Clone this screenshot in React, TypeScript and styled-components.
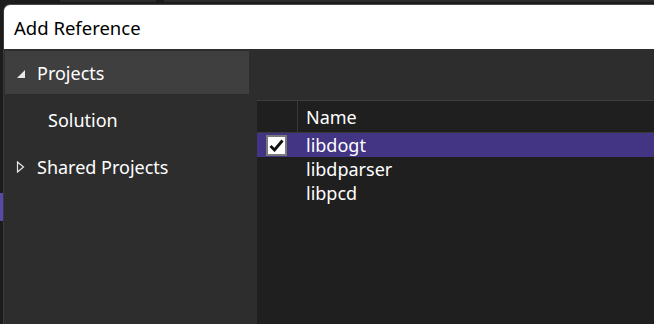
import React from 'react';
import styled, {createGlobalStyle} from 'styled-components';

const GlobalStyle = createGlobalStyle`
  html, body {
    margin: 0;
    padding: 0;
    background: #1c1c1c;
  }
  body {
    font-family: "Noto Sans", "Open Sans", sans-serif;
    color: #ffffff;
  }
`;

const Page = styled.div`
  display: flex;
  flex-direction: column;
  width: 654px;
  height: 324px;
  overflow: hidden;
  background: #1c1c1c;
`;

const TabStrip = styled.div`
  display: flex;
  height: 4px;
  gap: 8px;
  padding-left: 60px;
`;

const Tab = styled.div<{$width: number}>`
  width: ${(p) => p.$width}px;
  height: 2px;
  background: #2b2b2b;
`;

const Window = styled.div`
  flex: 1;
  display: flex;
  min-height: 0;
`;

const EdgeStrip = styled.div`
  width: 3px;
  display: flex;
  flex-direction: column;
  padding-top: 189px;
`;

const EdgeMarker = styled.div`
  width: 3px;
  height: 28px;
  background: #5a48a8;
`;

const Dialog = styled.div`
  flex: 1;
  display: flex;
  flex-direction: column;
  border-top: 1px solid #474747;
  border-left: 1px solid #3a3a3a;
  border-top-left-radius: 7px;
  overflow: hidden;
  background: #2d2d2d;
`;

const TitleBar = styled.div`
  height: 44px;
  flex-shrink: 0;
  display: flex;
  align-items: center;
  padding-left: 10px;
  background: #ffffff;
  color: #000000;
  font-size: 18.5px;
`;

const Body = styled.div`
  flex: 1;
  display: flex;
  min-height: 0;
`;

const Sidebar = styled.div`
  width: 245px;
  display: flex;
  flex-direction: column;
`;

const TreeItem = styled.div<{$selected?: boolean; $indent?: number}>`
  height: 43px;
  margin: 2px 0 2px 1px;
  display: flex;
  align-items: center;
  padding-left: ${(p) => p.$indent ?? 11}px;
  background: ${(p) => (p.$selected ? '#3f3f3f' : 'transparent')};
  font-size: 18px;
`;

const Expander = styled.svg`
  width: 10px;
  height: 12px;
  margin-right: 11px;
  flex-shrink: 0;
`;

const Main = styled.div`
  flex: 1;
  display: flex;
  flex-direction: column;
  padding: 51px 0 0 8px;
`;

const Grid = styled.div`
  flex: 1;
  background: #1f1f1f;
  border-top: 1px solid #3e3e3e;
  font-size: 18px;
`;

const HeaderRow = styled.div`
  display: flex;
  height: 31px;
  border-bottom: 1px solid #3a3a3a;
`;

const CheckCol = styled.div<{$header?: boolean}>`
  width: 41px;
  flex-shrink: 0;
  display: flex;
  align-items: center;
  justify-content: flex-end;
  padding-right: 10px;
  box-sizing: border-box;
  border-right: ${(p) => (p.$header ? '1px solid #3a3a3a' : '1px solid transparent')};
`;

const NameCell = styled.div`
  display: flex;
  align-items: center;
  padding-left: 8px;
`;

const Row = styled.div<{$selected?: boolean}>`
  display: flex;
  height: 24px;
  background: ${(p) => (p.$selected ? '#433584' : 'transparent')};
`;

const CheckBox = styled.div`
  width: 21px;
  height: 21px;
  box-sizing: border-box;
  border: 2px solid #7a7a7a;
  background: #ffffff;
  display: flex;
  align-items: center;
  justify-content: center;
`;

const items = [
  {name: 'libdogt', checked: true},
  {name: 'libdparser', checked: false},
  {name: 'libpcd', checked: false},
];

const App = () => (
  <>
    <GlobalStyle />
    <Page>
      <TabStrip>
        <Tab $width={98} />
        <Tab $width={500} />
      </TabStrip>
      <Window>
        <EdgeStrip>
          <EdgeMarker />
        </EdgeStrip>
        <Dialog>
          <TitleBar>Add Reference</TitleBar>
          <Body>
            <Sidebar>
              <TreeItem $selected>
                <Expander viewBox="0 0 10 12">
                  <polygon points="9,3 9,11 1,11" fill="#e8e8e8" />
                </Expander>
                Projects
              </TreeItem>
              <TreeItem $indent={43}>Solution</TreeItem>
              <TreeItem>
                <Expander viewBox="0 0 10 12">
                  <polygon points="1.5,1 7.5,6 1.5,11" fill="none" stroke="#e8e8e8" strokeWidth="1.2" />
                </Expander>
                Shared Projects
              </TreeItem>
            </Sidebar>
            <Main>
              <Grid>
                <HeaderRow>
                  <CheckCol $header />
                  <NameCell>Name</NameCell>
                </HeaderRow>
                {items.map((it) => (
                  <Row key={it.name} $selected={it.checked}>
                    <CheckCol>
                      {it.checked && (
                        <CheckBox>
                          <svg width="15" height="13" viewBox="0 0 15 13">
                            <path d="M1.5 7 L5.5 11 L13.5 1.5" fill="none" stroke="#111" strokeWidth="2.8" />
                          </svg>
                        </CheckBox>
                      )}
                    </CheckCol>
                    <NameCell>{it.name}</NameCell>
                  </Row>
                ))}
              </Grid>
            </Main>
          </Body>
        </Dialog>
      </Window>
    </Page>
  </>
);

export default App;
